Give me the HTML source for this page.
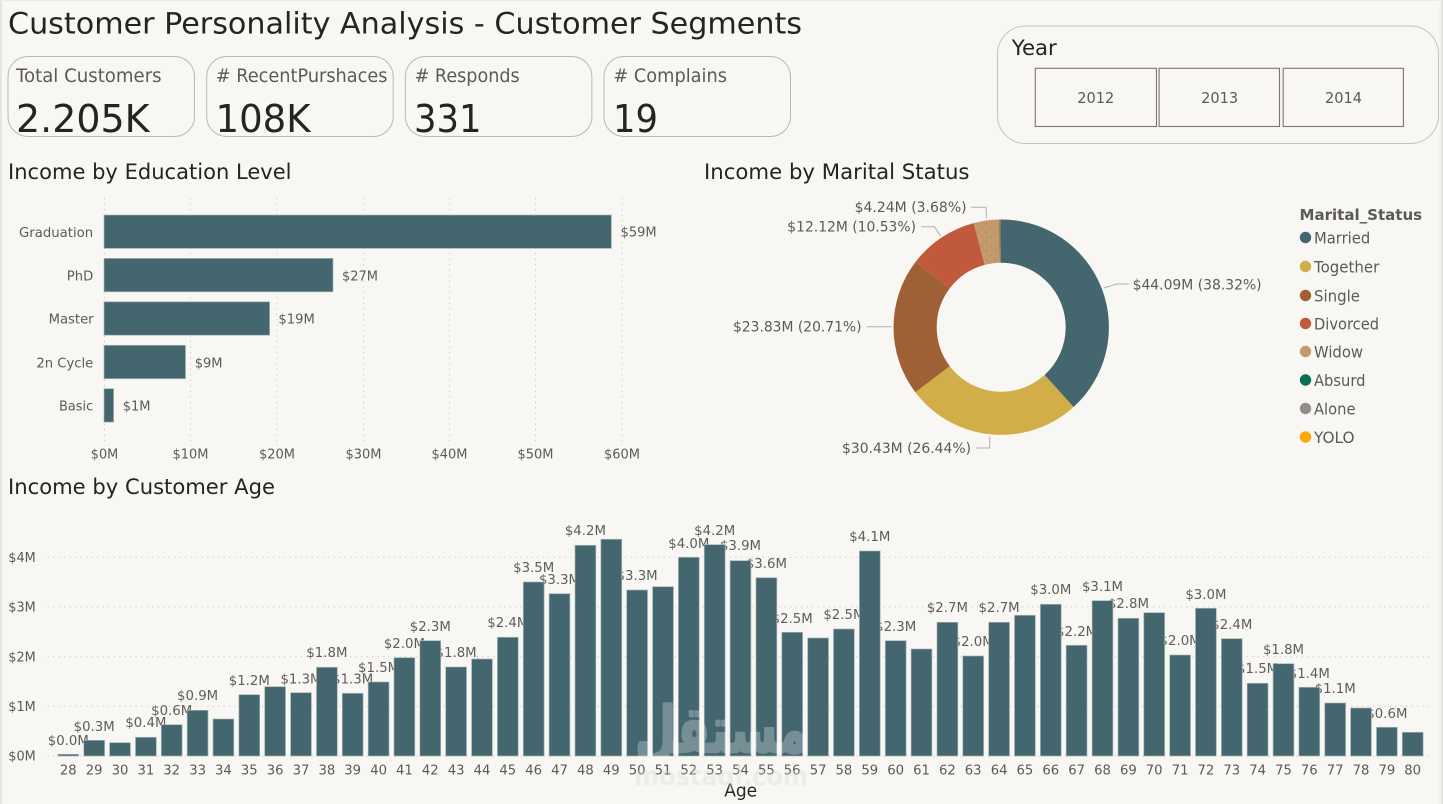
<!DOCTYPE html>
<html lang="en">
<head>
<meta charset="utf-8">
<title>Customer Personality Analysis - Customer Segments</title>
<style>
html,body{margin:0;padding:0;width:1443px;height:804px;overflow:hidden;background:#f9f7f3}
svg{display:block;position:absolute;left:0;top:0}
text{font-family:"DejaVu Sans","Liberation Sans",sans-serif}
.h{fill:#252423}
.a{font-size:13.4px;fill:#5c5a58}
.d{font-size:13.3px;fill:#605e5c;text-anchor:middle}
.x{font-size:13.2px;fill:#5c5a58;text-anchor:middle}
.k{font-size:19px;fill:#5c5a58}
.v{font-size:38px;fill:#252423}
.s{font-size:21.6px;fill:#252423}
.b{font-size:15px;fill:#5c5a58;text-anchor:middle}
.p{font-size:14.3px;fill:#5c5a58}
.l{font-size:16px;fill:#5c5a58}
.g{stroke:#d2d0ca;stroke-width:1;stroke-dasharray:1.5 4;fill:none}
.ld{fill:none;stroke:#b3b0ab;stroke-width:1}
#ages rect{fill:#43666f;stroke:#a5b3b4;stroke-width:.7;width:20.8px}
#edu rect{fill:#43666f;stroke:#a5b3b4;stroke-width:.7}
</style>
</head>
<body>
<svg width="1443" height="804" viewBox="0 0 1443 804" xmlns="http://www.w3.org/2000/svg">
<defs>
<pattern id="dots" width="9" height="9" patternUnits="userSpaceOnUse">
<rect width="9" height="9" fill="#c49a6c"/>
<circle cx="2" cy="2" r=".55" fill="#94704a"/>
<circle cx="6.5" cy="6.5" r=".55" fill="#94704a"/>
</pattern>
<pattern id="dots2" width="2.4" height="2.4" patternUnits="userSpaceOnUse">
<rect width="2.4" height="2.4" fill="#96938d"/>
<circle cx="1.2" cy="1.2" r=".6" fill="#7c7872"/>
</pattern>
</defs>

<rect width="1443" height="804" fill="#f9f7f3"/>
<rect x="0" y="0" width="1.6" height="804" fill="#e3e2df"/>
<rect x="0" y="0" width="1443" height="1" fill="#ebeae7"/>
<rect x="1439" y="0" width="2" height="804" fill="#f4f3ef"/>
<rect x="1441" y="0" width="2" height="804" fill="#e6e5e2"/>

<!-- Title -->
<text class="h" x="8" y="33.5" font-size="29" textLength="794" lengthAdjust="spacingAndGlyphs">Customer Personality Analysis - Customer Segments</text>

<!-- KPI cards -->
<g fill="none" stroke="#bab8b4" stroke-width="1">
<rect x="8" y="56.5" width="186.5" height="80" rx="20"/>
<rect x="206.7" y="56.5" width="186.5" height="80" rx="20"/>
<rect x="405.4" y="56.5" width="186.5" height="80" rx="20"/>
<rect x="604" y="56.5" width="186.5" height="80" rx="20"/>
</g>
<text class="k" x="16" y="82" textLength="145.6" lengthAdjust="spacingAndGlyphs">Total Customers</text>
<text class="k" x="215.8" y="82" textLength="171.7" lengthAdjust="spacingAndGlyphs"># RecentPurshaces</text>
<text class="k" x="414.6" y="82" textLength="105.1" lengthAdjust="spacingAndGlyphs"># Responds</text>
<text class="k" x="613.4" y="82" textLength="113.6" lengthAdjust="spacingAndGlyphs"># Complains</text>
<text class="v" x="16" y="132" textLength="133.5" lengthAdjust="spacingAndGlyphs">2.205K</text>
<text class="v" x="215.5" y="132" textLength="95" lengthAdjust="spacingAndGlyphs">108K</text>
<text class="v" x="414" y="132" textLength="67.5" lengthAdjust="spacingAndGlyphs">331</text>
<text class="v" x="613" y="132" textLength="45" lengthAdjust="spacingAndGlyphs">19</text>

<!-- Year slicer -->
<rect x="997.5" y="26" width="441" height="117.5" rx="28" fill="none" stroke="#c4c2be" stroke-width="1"/>
<text x="1011.8" y="55" font-size="21" fill="#252423" textLength="45" lengthAdjust="spacingAndGlyphs">Year</text>
<g fill="none" stroke="#7c746f" stroke-width="1.1">
<rect x="1035.3" y="68.3" width="121.2" height="58.2"/>
<rect x="1159.1" y="68.3" width="120.4" height="58.2"/>
<rect x="1283.2" y="68.3" width="120.2" height="58.2"/>
</g>
<text class="b" x="1095.8" y="103" textLength="37" lengthAdjust="spacingAndGlyphs">2012</text>
<text class="b" x="1219.6" y="103" textLength="37" lengthAdjust="spacingAndGlyphs">2013</text>
<text class="b" x="1343.5" y="103" textLength="37" lengthAdjust="spacingAndGlyphs">2014</text>

<!-- Section titles -->
<text class="s" x="8" y="179" textLength="283.5" lengthAdjust="spacingAndGlyphs">Income by Education Level</text>
<text class="s" x="704" y="179" textLength="265.5" lengthAdjust="spacingAndGlyphs">Income by Marital Status</text>
<text class="s" x="8" y="494" textLength="267" lengthAdjust="spacingAndGlyphs">Income by Customer Age</text>

<!-- Education chart -->
<g class="g">
<path d="M104.5 198V446M190.5 198V446M277 198V446M363.5 198V446M449.5 198V446M535.5 198V446M622 198V446"/>
</g>
<g id="edu">
<rect x="104" y="215" width="507.4" height="33.4"/>
<rect x="104" y="258.4" width="229" height="33.4"/>
<rect x="104" y="301.8" width="165.6" height="33.4"/>
<rect x="104" y="345.3" width="81.5" height="33.4"/>
<rect x="104" y="388.7" width="9.6" height="33.4"/>
</g>
<g class="a">
<text x="19" y="237" textLength="74.2" lengthAdjust="spacingAndGlyphs">Graduation</text>
<text x="66.8" y="280.5" textLength="26.4" lengthAdjust="spacingAndGlyphs">PhD</text>
<text x="48.6" y="323.5" textLength="45" lengthAdjust="spacingAndGlyphs">Master</text>
<text x="36.4" y="367.5" textLength="56.8" lengthAdjust="spacingAndGlyphs">2n Cycle</text>
<text x="59" y="410.5" textLength="34.2" lengthAdjust="spacingAndGlyphs">Basic</text>
<text x="620.6" y="236.5" textLength="36" lengthAdjust="spacingAndGlyphs">$59M</text>
<text x="342" y="280.5" textLength="36" lengthAdjust="spacingAndGlyphs">$27M</text>
<text x="278.4" y="323.5" textLength="36.4" lengthAdjust="spacingAndGlyphs">$19M</text>
<text x="194.7" y="367.5" textLength="27.8" lengthAdjust="spacingAndGlyphs">$9M</text>
<text x="122.7" y="410.5" textLength="27.8" lengthAdjust="spacingAndGlyphs">$1M</text>
</g>
<g class="x">
<text x="104.5" y="458.5" textLength="27.4" lengthAdjust="spacingAndGlyphs">$0M</text>
<text x="190.5" y="458.5" textLength="36" lengthAdjust="spacingAndGlyphs">$10M</text>
<text x="277" y="458.5" textLength="36" lengthAdjust="spacingAndGlyphs">$20M</text>
<text x="363.5" y="458.5" textLength="36" lengthAdjust="spacingAndGlyphs">$30M</text>
<text x="449.5" y="458.5" textLength="36" lengthAdjust="spacingAndGlyphs">$40M</text>
<text x="535.5" y="458.5" textLength="36" lengthAdjust="spacingAndGlyphs">$50M</text>
<text x="622" y="458.5" textLength="36" lengthAdjust="spacingAndGlyphs">$60M</text>
</g>

<!-- Donut -->
<g fill="none" stroke-width="43.2" transform="rotate(-90 1001.2 327.2)">
<circle cx="1001.2" cy="327.2" r="86.1" pathLength="100" stroke="#43666f" stroke-dasharray="38.32 61.68" stroke-dashoffset="0"/>
<circle cx="1001.2" cy="327.2" r="86.1" pathLength="100" stroke="#d2ae49" stroke-dasharray="26.44 73.56" stroke-dashoffset="-38.32"/>
<circle cx="1001.2" cy="327.2" r="86.1" pathLength="100" stroke="#a06036" stroke-dasharray="20.71 79.29" stroke-dashoffset="-64.76"/>
<circle cx="1001.2" cy="327.2" r="86.1" pathLength="100" stroke="#c1593c" stroke-dasharray="10.53 89.47" stroke-dashoffset="-85.47"/>
<circle cx="1001.2" cy="327.2" r="86.1" pathLength="100" stroke="url(#dots)" stroke-dasharray="3.68 96.32" stroke-dashoffset="-96"/>
<circle cx="1001.2" cy="327.2" r="86.1" pathLength="100" stroke="#a8814e" stroke-dasharray=".32 99.68" stroke-dashoffset="-99.68"/>
</g>
<path class="ld" d="M1104 288L1116.5 284H1128.5"/>
<path class="ld" d="M866.6 326.7H891.5"/>
<path class="ld" d="M976 448H989.7V436.5"/>
<path class="ld" d="M921 226.7H934.4L940.4 235.7"/>
<path class="ld" d="M971 207.3H986L986.5 218.3"/>
<g class="p">
<text x="1132.6" y="289.5" textLength="129" lengthAdjust="spacingAndGlyphs">$44.09M (38.32%)</text>
<text x="733" y="331.5" textLength="128.5" lengthAdjust="spacingAndGlyphs">$23.83M (20.71%)</text>
<text x="842" y="453" textLength="129" lengthAdjust="spacingAndGlyphs">$30.43M (26.44%)</text>
<text x="787.3" y="231.5" textLength="128.7" lengthAdjust="spacingAndGlyphs">$12.12M (10.53%)</text>
<text x="854.6" y="212" textLength="112" lengthAdjust="spacingAndGlyphs">$4.24M (3.68%)</text>
</g>

<!-- Legend -->
<text x="1299.5" y="220" font-size="15.5" font-weight="bold" fill="#5c5a58" textLength="122.6" lengthAdjust="spacingAndGlyphs">Marital_Status</text>
<circle cx="1305.5" cy="237.5" r="5.7" fill="#43666f"/>
<circle cx="1305.5" cy="266.5" r="5.7" fill="#d2ae49"/>
<circle cx="1305.5" cy="295.5" r="5.7" fill="#a06036"/>
<circle cx="1305.5" cy="323.5" r="5.7" fill="#c1593c"/>
<circle cx="1305.5" cy="351.5" r="5.7" fill="#c49a6c"/>
<circle cx="1305.5" cy="380" r="5.7" fill="#0a7055"/>
<circle cx="1305.5" cy="408.5" r="5.7" fill="url(#dots2)"/>
<circle cx="1305.5" cy="437" r="5.7" fill="#ffa600"/>
<g class="l">
<text x="1314" y="243.3" textLength="56.2" lengthAdjust="spacingAndGlyphs">Married</text>
<text x="1314" y="272.3" textLength="65.3" lengthAdjust="spacingAndGlyphs">Together</text>
<text x="1314" y="301.3" textLength="46" lengthAdjust="spacingAndGlyphs">Single</text>
<text x="1314" y="329.3" textLength="65" lengthAdjust="spacingAndGlyphs">Divorced</text>
<text x="1314" y="357.3" textLength="49" lengthAdjust="spacingAndGlyphs">Widow</text>
<text x="1314" y="385.8" textLength="51.5" lengthAdjust="spacingAndGlyphs">Absurd</text>
<text x="1314" y="414.3" textLength="41.5" lengthAdjust="spacingAndGlyphs">Alone</text>
<text x="1314" y="442.8" textLength="40.5" lengthAdjust="spacingAndGlyphs">YOLO</text>
</g>

<!-- Age chart grid -->
<path class="g" d="M47.5 557.3H1430M47.5 607H1430M47.5 656.7H1430M47.5 706.3H1430M47.5 756H1430"/>
<g class="a">
<text x="8.3" y="562" textLength="27.4" lengthAdjust="spacingAndGlyphs">$4M</text>
<text x="8.3" y="611.7" textLength="27.4" lengthAdjust="spacingAndGlyphs">$3M</text>
<text x="8.3" y="661.4" textLength="27.4" lengthAdjust="spacingAndGlyphs">$2M</text>
<text x="8.3" y="711" textLength="27.4" lengthAdjust="spacingAndGlyphs">$1M</text>
<text x="8.3" y="760.7" textLength="27.4" lengthAdjust="spacingAndGlyphs">$0M</text>
</g>

<!-- Data labels (under bars) -->
<g class="d">
<text x="68.3" y="745.2">$0.0M</text>
<text x="94.2" y="731.2">$0.3M</text>
<text x="145.9" y="726.8">$0.4M</text>
<text x="171.7" y="715.2">$0.6M</text>
<text x="197.6" y="700.2">$0.9M</text>
<text x="249.3" y="685.2">$1.2M</text>
<text x="301" y="683.5">$1.3M</text>
<text x="326.9" y="657.2">$1.8M</text>
<text x="352.7" y="683.5">$1.3M</text>
<text x="378.6" y="672.2">$1.5M</text>
<text x="404.4" y="648.2">$2.0M</text>
<text x="430.3" y="631.2">$2.3M</text>
<text x="456.1" y="657.2">$1.8M</text>
<text x="507.8" y="627.2">$2.4M</text>
<text x="533.7" y="572.2">$3.5M</text>
<text x="559.5" y="583.8">$3.3M</text>
<text x="585.4" y="535.2">$4.2M</text>
<text x="637.1" y="580.2">$3.3M</text>
<text x="688.8" y="547.8">$4.0M</text>
<text x="714.7" y="535.2">$4.2M</text>
<text x="740.5" y="549.8">$3.9M</text>
<text x="766.4" y="567.8">$3.6M</text>
<text x="792.2" y="622.8">$2.5M</text>
<text x="843.9" y="619.2">$2.5M</text>
<text x="869.8" y="541.2">$4.1M</text>
<text x="895.7" y="631.2">$2.3M</text>
<text x="947.4" y="612.2">$2.7M</text>
<text x="973.2" y="645.8">$2.0M</text>
<text x="999.1" y="612.2">$2.7M</text>
<text x="1050.8" y="593.8">$3.0M</text>
<text x="1076.6" y="636.2">$2.2M</text>
<text x="1102.5" y="591.2">$3.1M</text>
<text x="1128.4" y="608.2">$2.8M</text>
<text x="1180.1" y="645.2">$2.0M</text>
<text x="1205.9" y="599.2">$3.0M</text>
<text x="1231.8" y="629.2">$2.4M</text>
<text x="1257.6" y="673.2">$1.5M</text>
<text x="1283.5" y="653.8">$1.8M</text>
<text x="1309.3" y="677.8">$1.4M</text>
<text x="1335.2" y="693.2">$1.1M</text>
<text x="1386.9" y="717.8">$0.6M</text>
</g>

<!-- Age bars -->
<g id="ages">
<rect x="57.9" y="754.3" height="1.7"/>
<rect x="83.8" y="740.3" height="15.7"/>
<rect x="109.6" y="742.7" height="13.3"/>
<rect x="135.5" y="737.3" height="18.7"/>
<rect x="161.3" y="724.7" height="31.3"/>
<rect x="187.2" y="710.3" height="45.7"/>
<rect x="213" y="719" height="37"/>
<rect x="238.9" y="694.7" height="61.3"/>
<rect x="264.7" y="686.7" height="69.3"/>
<rect x="290.6" y="692.7" height="63.3"/>
<rect x="316.5" y="667.3" height="88.7"/>
<rect x="342.3" y="693.3" height="62.7"/>
<rect x="368.2" y="682" height="74"/>
<rect x="394" y="657.7" height="98.3"/>
<rect x="419.9" y="640.7" height="115.3"/>
<rect x="445.7" y="667" height="89"/>
<rect x="471.6" y="659" height="97"/>
<rect x="497.4" y="637.3" height="118.7"/>
<rect x="523.3" y="582" height="174"/>
<rect x="549.1" y="593.7" height="162.3"/>
<rect x="575" y="545.3" height="210.7"/>
<rect x="600.9" y="539.3" height="216.7"/>
<rect x="626.7" y="590" height="166"/>
<rect x="652.6" y="586.7" height="169.3"/>
<rect x="678.4" y="557.3" height="198.7"/>
<rect x="704.3" y="544.7" height="211.3"/>
<rect x="730.1" y="560.7" height="195.3"/>
<rect x="756" y="577.7" height="178.3"/>
<rect x="781.8" y="632.3" height="123.7"/>
<rect x="807.7" y="638" height="118"/>
<rect x="833.5" y="629" height="127"/>
<rect x="859.4" y="551" height="205"/>
<rect x="885.3" y="640.7" height="115.3"/>
<rect x="911.1" y="649" height="107"/>
<rect x="937" y="622.3" height="133.7"/>
<rect x="962.8" y="656" height="100"/>
<rect x="988.7" y="622.3" height="133.7"/>
<rect x="1014.5" y="615.3" height="140.7"/>
<rect x="1040.4" y="604.3" height="151.7"/>
<rect x="1066.2" y="645.3" height="110.7"/>
<rect x="1092.1" y="600.7" height="155.3"/>
<rect x="1118" y="618.3" height="137.7"/>
<rect x="1143.8" y="612.7" height="143.3"/>
<rect x="1169.7" y="655" height="101"/>
<rect x="1195.5" y="608.3" height="147.7"/>
<rect x="1221.4" y="638.7" height="117.3"/>
<rect x="1247.2" y="683.3" height="72.7"/>
<rect x="1273.1" y="663.7" height="92.3"/>
<rect x="1298.9" y="687.3" height="68.7"/>
<rect x="1324.8" y="703" height="53"/>
<rect x="1350.6" y="708" height="48"/>
<rect x="1376.5" y="727.3" height="28.7"/>
<rect x="1402.3" y="732.3" height="23.7"/>
</g>

<!-- Age axis -->
<g class="x">
<text x="68.3" y="774.5">28</text><text x="94.2" y="774.5">29</text><text x="120" y="774.5">30</text><text x="145.9" y="774.5">31</text><text x="171.7" y="774.5">32</text><text x="197.6" y="774.5">33</text><text x="223.4" y="774.5">34</text><text x="249.3" y="774.5">35</text><text x="275.1" y="774.5">36</text><text x="301" y="774.5">37</text><text x="326.9" y="774.5">38</text><text x="352.7" y="774.5">39</text><text x="378.6" y="774.5">40</text><text x="404.4" y="774.5">41</text><text x="430.3" y="774.5">42</text><text x="456.1" y="774.5">43</text><text x="482" y="774.5">44</text><text x="507.8" y="774.5">45</text><text x="533.7" y="774.5">46</text><text x="559.5" y="774.5">47</text><text x="585.4" y="774.5">48</text><text x="611.3" y="774.5">49</text><text x="637.1" y="774.5">50</text><text x="663" y="774.5">51</text><text x="688.8" y="774.5">52</text><text x="714.7" y="774.5">53</text><text x="740.5" y="774.5">54</text><text x="766.4" y="774.5">55</text><text x="792.2" y="774.5">56</text><text x="818.1" y="774.5">57</text><text x="843.9" y="774.5">58</text><text x="869.8" y="774.5">59</text><text x="895.7" y="774.5">60</text><text x="921.5" y="774.5">61</text><text x="947.4" y="774.5">62</text><text x="973.2" y="774.5">63</text><text x="999.1" y="774.5">64</text><text x="1024.9" y="774.5">65</text><text x="1050.8" y="774.5">66</text><text x="1076.6" y="774.5">67</text><text x="1102.5" y="774.5">68</text><text x="1128.4" y="774.5">69</text><text x="1154.2" y="774.5">70</text><text x="1180.1" y="774.5">71</text><text x="1205.9" y="774.5">72</text><text x="1231.8" y="774.5">73</text><text x="1257.6" y="774.5">74</text><text x="1283.5" y="774.5">75</text><text x="1309.3" y="774.5">76</text><text x="1335.2" y="774.5">77</text><text x="1361" y="774.5">78</text><text x="1386.9" y="774.5">79</text><text x="1412.7" y="774.5">80</text>
</g>
<text x="740.7" y="796.7" font-size="17.5" fill="#252423" text-anchor="middle" textLength="33" lengthAdjust="spacingAndGlyphs">Age</text>

<!-- Watermark -->
<text x="635" y="752" font-size="64" font-weight="bold" fill="#ffffff" stroke="#ffffff" stroke-width="2.5" stroke-linejoin="round" opacity=".27" textLength="173" lengthAdjust="spacingAndGlyphs">مستقل</text>
<text x="634" y="785" font-size="27" font-weight="bold" fill="#d8d6d1" opacity=".32" textLength="174" lengthAdjust="spacingAndGlyphs">mostaql.com</text>
</svg>
</body>
</html>
